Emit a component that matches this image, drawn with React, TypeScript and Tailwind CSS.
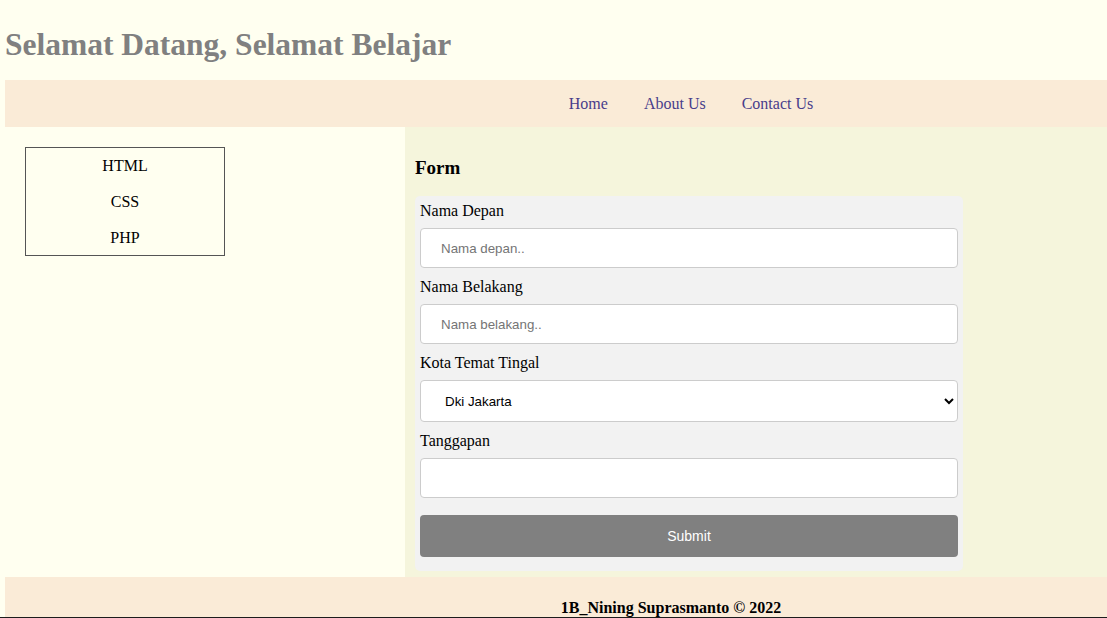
import React from 'react';

const menuItems = ['HTML', 'CSS', 'PHP'];
const navLinks = ['Home', 'About Us', 'Contact Us'];

const inputClass =
  "block w-full h-10 my-2 px-5 bg-white border border-[#cccccc] rounded-[4px] font-['Liberation_Sans',Arial,sans-serif] text-[13.33px] text-black placeholder:text-[#757575] outline-none";

const Label: React.FC<{ children: React.ReactNode }> = ({ children }) => (
  <label className="block h-5 leading-[21px] text-[16px] text-black">{children}</label>
);

export default function App() {
  return (
    <div className="h-[618px] overflow-hidden border-b border-[#1c1c1c] bg-[#fffff0] font-['Liberation_Serif',Cambria,serif]">
      <div className="w-[1342px] px-[5px]">
        <h1 className="mt-[26px] mb-[17px] h-[37px] leading-[37px] text-[31.5px] font-bold text-[#808080]">
          Selamat Datang, Selamat Belajar
        </h1>

        <nav className="h-[47px] bg-[#faebd7] flex items-center justify-center pl-10">
          {navLinks.map((link) => (
            <a key={link} href="#" className="px-[18px] text-[16px] text-[#483d8b]">
              {link}
            </a>
          ))}
        </nav>

        <div className="flex">
          <aside className="w-[400px] shrink-0 p-5">
            <ul className="w-[200px] h-[109px] border border-[#555555]">
              {menuItems.map((item) => (
                <li key={item} className="h-9 flex items-center justify-center text-[16px] text-black">
                  {item}
                </li>
              ))}
            </ul>
          </aside>

          <main className="flex-1 bg-[#f5f5dc] px-[10px] pt-[29px] pb-[6px]">
            <h3 className="h-[22px] leading-[24px] text-[19px] font-bold text-black mb-[18px]">Form</h3>
            <form className="w-[548px] bg-[#f2f2f2] rounded-[5px] px-[5px] pt-1 pb-[14px]">
              <Label>Nama Depan</Label>
              <input type="text" placeholder="Nama depan.." className={inputClass} />

              <Label>Nama Belakang</Label>
              <input type="text" placeholder="Nama belakang.." className={inputClass} />

              <Label>Kota Temat Tingal</Label>
              <select
                defaultValue="jakarta"
                className="block w-full h-[42px] my-2 pl-5 pr-2 bg-white border border-[#cccccc] rounded-[4px] font-['Liberation_Sans',Arial,sans-serif] text-[13.33px] text-black"
              >
                <option value="jakarta">Dki Jakarta</option>
                <option value="bandung">Bandung</option>
                <option value="surabaya">Surabaya</option>
              </select>

              <Label>Tanggapan</Label>
              <input type="text" className={inputClass} />

              <button
                type="button"
                className="block w-full h-[42px] mt-[17px] bg-[#808080] text-white rounded-[4px] font-['Liberation_Sans',Arial,sans-serif] text-[14px]"
              >
                Submit
              </button>
            </form>
          </main>
        </div>

        <footer className="bg-[#faebd7] pt-[21px] pb-5 text-center">
          <p className="h-5 leading-5 text-[16px] font-bold text-black">1B_Nining Suprasmanto © 2022</p>
        </footer>
      </div>
    </div>
  );
}
